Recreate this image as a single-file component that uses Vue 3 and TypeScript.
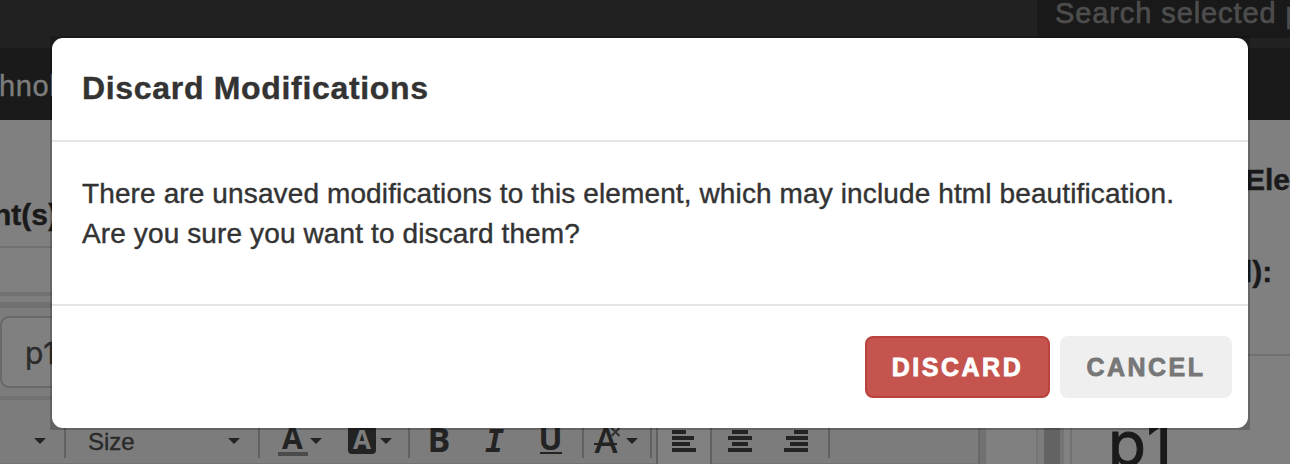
<script setup lang="ts">
interface Bar { y: number; x1: number; x2: number }

const alignLeft: Bar[] = [
  { y: 430, x1: 672, x2: 686 },
  { y: 436, x1: 672, x2: 694 },
  { y: 442, x1: 672, x2: 690 },
  { y: 448, x1: 672, x2: 696 },
]
const alignOthers: Bar[] = [
  { y: 430, x1: 732, x2: 748 },
  { y: 436, x1: 728, x2: 752 },
  { y: 442, x1: 732, x2: 748 },
  { y: 448, x1: 728, x2: 752 },
  { y: 430, x1: 794, x2: 808 },
  { y: 436, x1: 786, x2: 808 },
  { y: 442, x1: 790, x2: 808 },
  { y: 448, x1: 784, x2: 808 },
]
</script>

<template>
  <div class="screen">
    <header class="topbar">
      <div class="search"><span>Search selected p</span></div>
    </header>
    <nav class="nav"><span>hnol</span></nav>
    <main class="workspace">
      <section class="editor">
        <h2 class="elements"><span>nt(s)</span></h2>
        <div class="row"></div>
        <div class="gap"></div>
        <div class="form">
          <div class="field">p1</div>
        </div>
        <div class="toolbar">
          <svg class="cell" width="64" height="64" viewBox="0 400 64 64">
            <path d="M34 438h12l-6 6z" />
          </svg>
          <i class="sep"></i>
          <svg class="cell" width="192" height="64" viewBox="66 400 192 64">
            <text class="size" x="88" y="450">Size</text>
            <path d="M228 438h12l-6 6z" />
          </svg>
          <i class="sep"></i>
          <svg class="cell" width="148" height="64" viewBox="260 400 148 64">
            <text class="glyph" x="282" y="449" font-size="30">A</text>
            <path class="swatch" d="M278 452h30v4h-30z" />
            <path d="M310 438h12l-6 6z" />
            <rect x="348" y="426" width="28" height="28" rx="4" />
            <text class="glyph cut" x="353" y="449" font-size="26">A</text>
            <path d="M380 438h12l-6 6z" />
          </svg>
          <i class="sep"></i>
          <svg class="cell" width="172" height="64" viewBox="410 400 172 64">
            <text class="glyph" x="427.5" y="452" font-size="34">B</text>
            <text class="slab" x="485" y="452" font-size="32">I</text>
            <text class="glyph" x="538.5" y="450" font-size="33" textLength="24" lengthAdjust="spacingAndGlyphs">U</text>
            <path d="M540 452h22v2h-22z" />
          </svg>
          <i class="sep"></i>
          <svg class="cell" width="66" height="64" viewBox="584 400 66 64">
            <text class="glyph clear" x="594.5" y="453" font-size="34" textLength="23" lengthAdjust="spacingAndGlyphs">A</text>
            <path d="M594 443h23v2h-23z" />
            <path class="cross" d="M611.5 428l8 8m0-8l-8 8" />
            <path d="M626 438h12l-6 6z" />
          </svg>
          <i class="sep"></i>
          <i class="spacer"></i>
          <i class="sep full"></i>
          <svg class="cell active" width="52" height="64" viewBox="658 400 52 64">
            <rect v-for="b in alignLeft" :key="b.y" :x="b.x1" :y="b.y" :width="b.x2 - b.x1" height="4" />
          </svg>
          <i class="sep full"></i>
          <svg class="cell" width="116" height="64" viewBox="712 400 116 64">
            <rect v-for="(b, n) in alignOthers" :key="n" :x="b.x1" :y="b.y" :width="b.x2 - b.x1" height="4" />
          </svg>
          <i class="sep"></i>
        </div>
      </section>
      <div class="edge"></div>
      <div class="gutter"></div>
      <div class="rule"></div>
      <div class="gutter narrow"></div>
      <div class="splitter"></div>
      <div class="bevel"></div>
      <section class="preview">
        <div class="preview-head">
          <div class="label first">Ele</div>
          <div class="label second">l):</div>
        </div>
        <div class="preview-body">p1</div>
      </section>
    </main>

    <div class="modal-frame">
      <div class="modal" role="dialog">
        <div class="modal-header"><span>Discard Modifications</span></div>
        <div class="modal-body">
          <div class="line">There are unsaved modifications to this element, which may include html beautification.</div>
          <div class="line">Are you sure you want to discard them?</div>
        </div>
        <div class="modal-footer">
          <button class="btn danger">DISCARD</button>
          <button class="btn">CANCEL</button>
        </div>
      </div>
    </div>
  </div>
</template>

<style scoped>
* { box-sizing: border-box; }
.screen {
  position: relative;
  width: 1290px;
  height: 464px;
  overflow: hidden;
  background: #808080;
  font-family: "Liberation Sans", Arial, sans-serif;
  white-space: nowrap;
  -webkit-text-stroke-width: 0.4px;
}
.topbar { height: 48px; background: #212121; display: flex; justify-content: flex-end; }
.search {
  width: 253px;
  height: 38px;
  background: #191919;
  border-radius: 0 0 0 6px;
  padding-left: 18px;
  overflow: hidden;
  color: #4d4d4d;
  font-size: 29px;
  line-height: 27px;
  letter-spacing: 0.9px;
  -webkit-text-stroke-width: 0.7px;
}
.nav { height: 72px; background: #1a1a1a; color: #7d7d7d; font-size: 29px; line-height: 76px; letter-spacing: 0.6px; }
.nav span { margin-left: -1px; }
.workspace { display: flex; height: 344px; }
.editor { width: 978px; display: flex; flex-direction: column; overflow: hidden; background: #808080; }
.elements {
  margin: 0;
  height: 128px;
  border-bottom: 2px solid #707070;
  padding-top: 75px;
  font-size: 30px;
  line-height: 40px;
  color: #1a1a1a;
}
.elements span { margin-left: -7px; }
.row { height: 48px; border-bottom: 4px solid #727272; }
.gap { height: 12px; border-bottom: 6px solid #707070; background: #7e7e7e; }
.form { height: 92px; padding-top: 8px; background: #7c7c7c; border-bottom: 4px solid #727272; }
.field {
  width: 600px;
  height: 72px;
  border: 2px solid #696969;
  border-radius: 9px;
  background: #808080;
  padding-left: 23px;
  color: #2b2b2b;
  font-family: Inter, sans-serif;
  font-size: 30px;
  line-height: 71px;
  letter-spacing: 1px;
  -webkit-text-stroke-width: 0.4px;
}
.toolbar { height: 64px; display: flex; background: #7c7c7c; border-bottom: 1px solid #737373; fill: #232323; }
.cell { display: block; flex: none; }
.active { background: #818181; }
.sep { flex: none; width: 2px; height: 58px; background: #616161; }
.full { height: 64px; }
.spacer { flex: none; width: 4px; }
.size { font-size: 24px; fill: #292929; stroke: #292929; stroke-width: 0.4px; }
.glyph { font-family: "Open Sans", sans-serif; font-weight: 700; }
.clear { font-weight: 600; }
.cut { fill: #7c7c7c; }
.slab { font-family: "DejaVu Sans Mono", monospace; font-weight: 700; font-style: italic; }
.swatch { fill: #4b4b4b; }
.cross { fill: none; stroke: #303030; stroke-width: 2; }
.edge { width: 8px; background: #717171; border-left: 2px solid #696969; }
.gutter { width: 50px; background: #808080; }
.rule { width: 2px; background: #757575; }
.narrow { width: 6px; background: #7c7c7c; }
.splitter { width: 16px; background: #636363; }
.bevel { width: 12px; background: linear-gradient(90deg, #747474 0 4px, #828282 4px 10px, #727272 10px); }
.preview { flex: 1; overflow: hidden; color: #1a1a1a; }
.preview-head { height: 236px; border-bottom: 2px solid #707070; padding: 40px 0 0 173px; font-size: 30px; font-weight: 700; line-height: 40px; }
.second { margin: 52px 0 0 -1px; }
.preview-body {
  padding: 51px 0 0 36px;
  font-family: Inter, sans-serif;
  font-size: 62px;
  line-height: 74px;
  letter-spacing: 3px;
  -webkit-text-stroke-width: 1px;
}
.modal-frame { position: absolute; left: 50px; top: 36px; padding: 2px; background: rgba(0, 0, 0, 0.2); }
.modal { width: 1196px; height: 390px; border-radius: 11px; background: #fff; color: #333; }
.modal-header {
  height: 104px;
  border-bottom: 2px solid #e5e5e5;
  padding-left: 30px;
  font-size: 32px;
  font-weight: 700;
  line-height: 100px;
  letter-spacing: 0.68px;
}
.modal-body { height: 164px; border-bottom: 2px solid #e5e5e5; padding: 32px 30px 0; font-size: 28px; line-height: 40px; letter-spacing: 0.12px; }
.modal-footer { display: flex; justify-content: flex-end; gap: 10px; padding: 30px 16px; }
.btn {
  height: 62px;
  width: 172px;
  border: 2px solid #efefef;
  border-radius: 8px;
  background: #efefef;
  color: #777;
  padding: 0;
  font-family: inherit;
  font-size: 25px;
  font-weight: 700;
  line-height: 58px;
  letter-spacing: 2.5px;
  -webkit-text-stroke-width: 0.8px;
}
.danger { width: 185px; background: #c5534e; border-color: #b9423d; color: #fff; }
</style>
